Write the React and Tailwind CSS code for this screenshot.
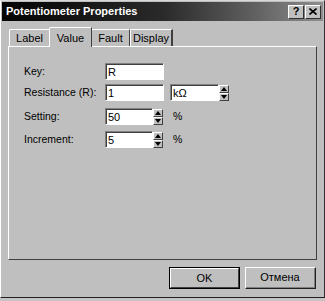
export default function App() {
  const font = { fontFamily: '"Liberation Sans", Arial, sans-serif' };
  const sunken =
    "border-t border-l border-t-[#808080] border-l-[#808080] border-b border-r border-b-white border-r-white";
  const Spin = () => (
    <div className="flex flex-col w-[10px] h-[16px]">
      <div className="flex-1 bg-[#c0c0c0] border-t border-l border-white border-b border-r border-b-[#404040] border-r-[#404040] flex items-center justify-center">
        <svg width="6" height="4" viewBox="0 0 6 4"><path d="M3 0 L6 4 L0 4 Z" fill="#000" /></svg>
      </div>
      <div className="flex-1 bg-[#c0c0c0] border-t border-l border-white border-b border-r border-b-[#404040] border-r-[#404040] flex items-center justify-center">
        <svg width="6" height="4" viewBox="0 0 6 4"><path d="M0 0 L6 0 L3 4 Z" fill="#000" /></svg>
      </div>
    </div>
  );
  const Input = ({ w, v }) => (
    <div className={`h-[17px] bg-white ${sunken} flex items-center`} style={{ width: w }}>
      <div className="h-full w-full border-t border-l border-[#404040] border-r-0 border-b-0 pl-[1px] text-[11px] leading-[14px] text-black">
        {v}
      </div>
    </div>
  );
  return (
    <div className="w-[325px] h-[301px] bg-[#c4c4c4] overflow-hidden" style={font}>
      <div className="w-[325px] h-[298px] bg-[#bfbfbf] relative">
        <div className="absolute inset-0 border-t border-l border-t-[#d8d8d8] border-l-white border-b border-r border-b-[#202020] border-r-[#303030] pointer-events-none" />
        <div className="flex flex-col h-full p-[2px]">
          {/* title */}
          <div className="h-[19px] flex items-center justify-between pl-[4px] pr-[2px] bg-gradient-to-r from-[#050505] via-[#2a2a2a] to-[#8e8e8e]">
            <span className="text-white font-bold text-[11px] leading-none">Potentiometer Properties</span>
            <div className="flex gap-[1px]">
              <div className="w-[16px] h-[14px] bg-[#c0c0c0] border-t border-l border-white border-b border-r border-b-[#303030] border-r-[#303030] flex items-center justify-center text-[11px] font-bold leading-none">?</div>
              <div className="w-[16px] h-[14px] bg-[#c0c0c0] border-t border-l border-white border-b border-r border-b-[#303030] border-r-[#303030] flex items-center justify-center">
                <svg width="8" height="7" viewBox="0 0 8 7"><path d="M0.5 0.5 L7.5 6.5 M7.5 0.5 L0.5 6.5" stroke="#000" strokeWidth="1.6" /></svg>
              </div>
            </div>
          </div>
          {/* tabs */}
          <div className="mt-[6px] mx-[6px] flex items-end h-[19px] text-[11px] text-black">
            <div className="ml-[1px] w-[41px] h-[17px] border-t border-l border-white border-r border-r-[#404040] rounded-tl-[2px] flex items-center justify-center pt-[1px]">Label</div>
            <div className="-ml-[1px] w-[43px] h-[20px] border-t border-l border-white border-r border-r-[#404040] rounded-tl-[2px] bg-[#bfbfbf] relative z-10 -mb-[1px] flex items-start justify-center pt-[2px]">Value</div>
            <div className="w-[38px] h-[17px] border-t border-white border-r border-r-[#404040] flex items-center justify-center pt-[1px]">Fault</div>
            <div className="w-[43px] h-[17px] border-t border-l border-white border-r-2 border-r-[#404040] flex items-center justify-center pt-[1px]">Display</div>
          </div>
          {/* panel */}
          <div className="mx-[6px] h-[214px] border-t border-l border-white border-b border-r border-b-[#404040] border-r-[#404040]">
            <div className="pl-[15px] pt-[16px] flex flex-col gap-[6px] text-[10.5px] text-black">
              <div className="flex items-center h-[17px]">
                <span className="w-[81px]">Key:</span>
                <Input w={59} v="R" />
              </div>
              <div className="flex items-center h-[17px] -mt-[2px]">
                <span className="w-[81px]">Resistance (R):</span>
                <Input w={59} v="1" />
                <div className="ml-[6px] flex items-center">
                  <Input w={49} v="kΩ" />
                  <Spin />
                </div>
              </div>
              <div className="flex items-center h-[17px] mt-[1px]">
                <span className="w-[81px]">Setting:</span>
                <Input w={48} v="50" />
                <Spin />
                <span className="ml-[10px]">%</span>
              </div>
              <div className="flex items-center h-[17px]">
                <span className="w-[81px]">Increment:</span>
                <Input w={48} v="5" />
                <Spin />
                <span className="ml-[10px]">%</span>
              </div>
            </div>
          </div>
          {/* buttons */}
          <div className="flex justify-end gap-[5px] mt-[7px] mr-[7px] text-[11px]">
            <div className="w-[71px] h-[22px] border border-black">
              <div className="w-full h-full border-t border-l border-white border-b border-r border-b-[#404040] border-r-[#404040] flex items-center justify-center">OK</div>
            </div>
            <div className="w-[71px] h-[22px] border-t border-l border-white border-b border-r border-b-[#202020] border-r-[#202020]">
              <div className="w-full h-full border-b border-r border-b-[#808080] border-r-[#808080] flex items-center justify-center">Отмена</div>
            </div>
          </div>
        </div>
      </div>
    </div>
  );
}
